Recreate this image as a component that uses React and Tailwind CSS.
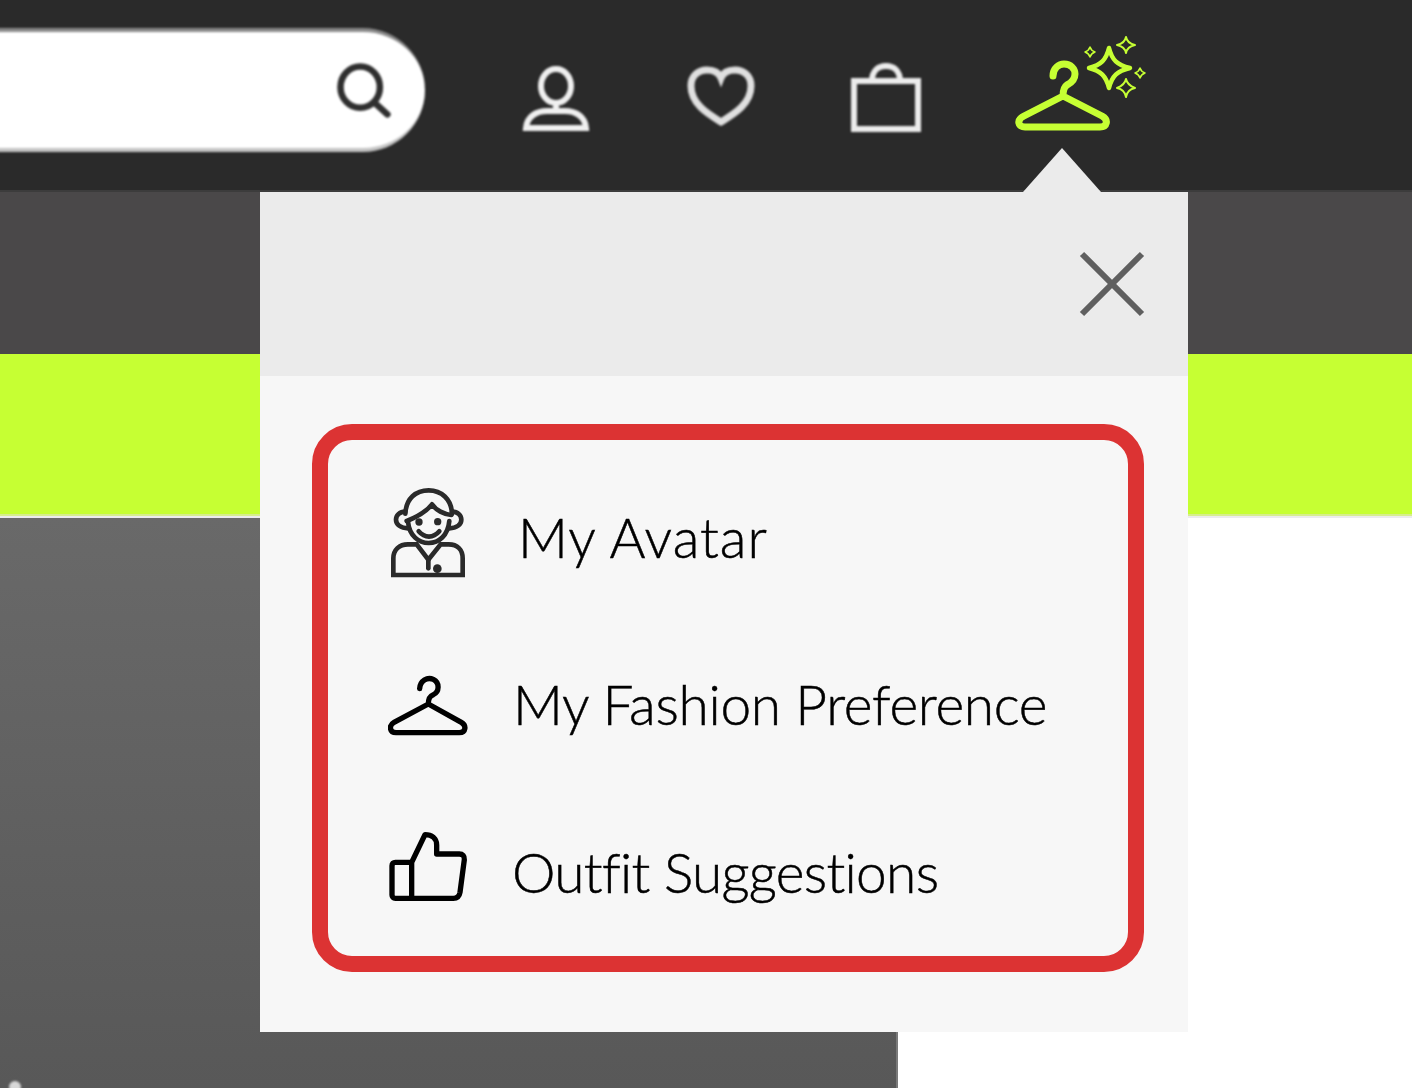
import React from "react";

const items = [
  { label: "My Avatar", icon: "avatar", text: "ml-[50px] tracking-[1px]" },
  { label: "My Fashion Preference", icon: "hanger", text: "ml-[45px] tracking-[-0.3px]" },
  { label: "Outfit Suggestions", icon: "thumb", text: "ml-[44px] tracking-[-0.7px]" },
];

function MenuIcon({ name }) {
  if (name === "avatar") {
    return (
      <svg viewBox="54 21 240 360" className="w-[80px] h-[120px] shrink-0" fill="none" stroke="#2a2a2a" strokeWidth="14" strokeLinecap="round" strokeLinejoin="round">
        <path d="M106 128C108 82 138 58 176 58C214 58 244 84 246 128" />
        <path d="M110 150C130 142 162 130 186 100C198 118 222 130 244 132" />
        <path d="M114 152C118 194 146 216 176 216C206 216 234 194 238 150" />
        <path d="M106 122C88 122 78 134 78 146C78 160 92 172 114 172" />
        <path d="M246 122C264 122 274 134 274 146C274 160 260 172 238 172" />
        <path d="M146 181C164 202 190 202 208 181" />
        <circle cx="147" cy="153" r="11" fill="#2a2a2a" stroke="none" />
        <circle cx="203" cy="152" r="11" fill="#2a2a2a" stroke="none" />
        <path d="M70 312V262C70 236 88 220 114 220H140L175 266L212 220H236C262 220 278 236 278 262V312Z" strokeLinejoin="miter" />
        <path d="M175 266V292" />
        <circle cx="202" cy="293" r="13" fill="#2a2a2a" stroke="none" />
      </svg>
    );
  }
  if (name === "hanger") {
    return (
      <svg viewBox="54 -45 240 360" className="w-[80px] h-[120px] shrink-0" fill="none" stroke="#000" strokeWidth="16" strokeLinecap="round" strokeLinejoin="round">
        <path d="M149 86C150 62 172 50 190 58C210 68 208 96 190 104C180 108 175 114 175 132L72 187C56 196 58 218 78 218H268C288 218 290 196 274 187L175 132" />
      </svg>
    );
  }
  return (
    <svg viewBox="54 459 240 360" className="w-[80px] h-[120px] shrink-0" fill="none" stroke="#000" strokeWidth="16" strokeLinecap="round" strokeLinejoin="round">
      <path d="M125 610L165 527C185 527 200 538 200 558V585H268C278 585 284 592 283 602L270 700C268 712 260 718 250 718H76C70 718 66 714 66 708V620C66 614 70 610 76 610H125V718" />
    </svg>
  );
}

export default function App() {
  return (
    <div className="relative w-[1412px] h-[1088px] overflow-hidden bg-white font-['Lato',sans-serif]">
      {/* top bar */}
      <header className="h-[190px] bg-[#2a2a2a] flex items-start pt-[28px]">
        <div className="w-[431px] -ml-[6px] h-[124px] bg-white rounded-r-[62px] border-t-4 border-b-4 border-t-[#8a8a8a] border-b-[#c4c4c4] flex items-center justify-end pr-[32px] shrink-0 blur-[0.8px]">
          <svg viewBox="0 0 64 64" className="w-[60px] h-[60px]" fill="none" stroke="#2f2f2f" strokeWidth="7">
            <ellipse cx="29" cy="29" rx="21" ry="22" />
            <path d="M46 47L58 58" strokeLinecap="round" />
          </svg>
        </div>

        <svg viewBox="0 0 70 70" className="w-[70px] h-[70px] ml-[96px] mt-[34px] shrink-0 blur-[1px]" fill="none" stroke="#f0f0f0" strokeWidth="6">
          <ellipse cx="35" cy="24" rx="15" ry="17" />
          <path d="M35 41V49" />
          <path d="M5 66C6 54 16 49 26 49H44C54 49 64 54 65 66Z" />
        </svg>

        <svg viewBox="0 0 70 70" className="w-[70px] h-[70px] ml-[95px] mt-[34px] shrink-0 blur-[1px]" fill="none" stroke="#e0e0e0" strokeWidth="7">
          <path d="M35 60C22 52 5 42 5 24C5 13 13 8 21 8C28 8 33 11 35 16C37 11 42 8 49 8C57 8 65 13 65 24C65 42 48 52 35 60Z" />
        </svg>

        <svg viewBox="0 0 70 70" className="w-[70px] h-[70px] ml-[95px] mt-[34px] shrink-0 blur-[1px]" fill="none" stroke="#ececec" strokeWidth="6">
          <path d="M3 19H67V67H3Z" />
          <path d="M21 19C21 9 27 4 35 4C43 4 49 9 49 19" />
        </svg>

        <svg viewBox="1010 30 140 105" className="w-[140px] h-[105px] ml-[90px] mt-[2px] shrink-0" fill="none" stroke="#c6ff33" strokeLinecap="round" strokeLinejoin="round">
          <path strokeWidth="7" d="M1053 76C1053 68 1059 64 1064 64C1071 64 1075 69 1075 74C1075 79 1071 83 1067 85C1064 87 1063 90 1063 96L1024 116C1016 120 1018 127 1025 127H1100C1107 127 1109 120 1102 116L1063 96" transform="translate(-1 0)" />
          <path strokeWidth="4.5" d="M1108 48C1111 60 1116 65 1129 68C1116 71 1111 76 1108 88C1105 76 1100 71 1088 68C1100 65 1105 60 1108 48Z" />
          <path strokeWidth="2" d="M1125 37C1126 42 1129 44 1134 45C1129 46 1126 48 1125 53C1124 48 1121 46 1116 45C1121 44 1124 42 1125 37Z" />
          <path strokeWidth="2" d="M1125 79C1126 84 1129 86 1134 88C1129 89 1126 91 1125 97C1124 91 1121 89 1116 88C1121 86 1124 84 1125 79Z" />
          <path strokeWidth="1.5" d="M1089 47C1090 50 1091 51 1094 52C1091 53 1090 54 1089 57C1088 54 1087 53 1084 52C1087 51 1088 50 1089 47Z" />
          <path strokeWidth="1.5" d="M1139 68C1140 71 1141 72 1144 73C1141 74 1140 75 1139 78C1138 75 1137 74 1134 73C1137 72 1138 71 1139 68Z" />
        </svg>
      </header>

      <div className="h-[164px] bg-[#4a4849] border-t-2 border-t-[#3c3c3c]" />
      <div className="h-[162px] bg-[#c6ff33] border-b-2 border-b-[#d6ee8c]" />

      <div className="h-[572px] border-t-2 border-t-[#ececec]">
        <div className="w-[898px] h-full bg-gradient-to-b from-[#696969] to-[#585858] border-r-2 border-r-[#7a7a7a]" />
      </div>

      {/* speck of the hero image at the bottom edge */}
      <div className="absolute left-[9px] top-[1081px] w-[12px] h-[12px] rounded-full bg-[#d8d8d8] blur-[1px]" />

      {/* popover */}
      <div className="absolute left-[260px] top-[192px] w-[928px] h-[840px] bg-[#f7f7f7]">
        <div className="absolute left-[763px] -top-[44px] w-[78px] h-[44px] bg-[#ebebeb] [clip-path:polygon(50%_0,100%_100%,0_100%)]" />
        <div className="h-[184px] bg-[#ebebeb] flex justify-end items-start pt-[59px] pr-[43px]">
          <svg viewBox="0 0 66 66" className="w-[66px] h-[66px]" fill="none" stroke="#5f5f5f" strokeWidth="6">
            <path d="M3 3L63 63M63 3L3 63" />
          </svg>
        </div>
        <div className="pt-[48px] px-[52px]">
          <ul className="w-[832px] h-[548px] border-[16px] border-[#dc3333] rounded-[40px] flex flex-col justify-center pt-[14px] pl-[60px]">
            {items.map((item) => (
              <li key={item.label} className="h-[168px] flex items-center">
                <MenuIcon name={item.icon} />
                <span className={`${item.text} text-[55px] leading-none text-black font-light [-webkit-text-stroke:0.5px_black]`}>{item.label}</span>
              </li>
            ))}
          </ul>
        </div>
      </div>
    </div>
  );
}
